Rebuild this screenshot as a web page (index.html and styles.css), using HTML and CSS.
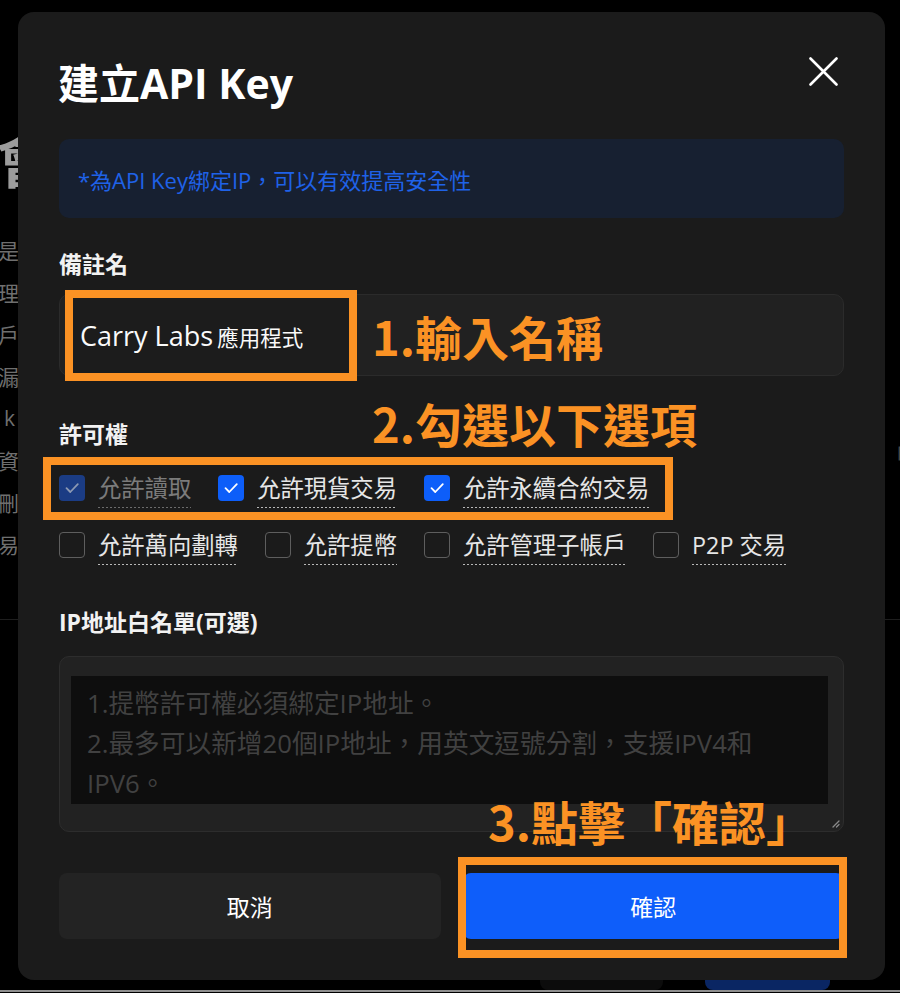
FILE: index.html
```html
<!DOCTYPE html>
<html lang="zh-Hant">
<head>
<meta charset="utf-8">
<title>建立API Key</title>
<link rel="stylesheet" href="styles.css">
</head>
<body>
<div class="page">
  <div class="bg">
    <div class="bg-title">會</div>
    <div class="bg-lines">
      <div class="bg-line">是</div>
      <div class="bg-line">理</div>
      <div class="bg-line">戶</div>
      <div class="bg-line">漏</div>
      <div class="bg-line bg-latin">k</div>
      <div class="bg-line bg-split"><span>資</span><span class="bg-right">「權</span></div>
      <div class="bg-line">刪</div>
      <div class="bg-line">易</div>
    </div>
    <div class="bg-rule"></div>
    <div class="bg-actions"><span class="bg-btn"></span><span class="bg-btn bg-btn-primary"></span></div>
    <div class="bg-edge"></div>
  </div>

  <div class="modal">
    <div class="modal-head">
      <h1 class="modal-title">建立API Key</h1>
      <svg class="close" width="29" height="29" viewBox="0 0 29 29" aria-label="關閉">
        <path d="M1.5 1.5 L27.5 27.5 M27.5 1.5 L1.5 27.5" stroke="#ffffff" stroke-width="2.6" stroke-linecap="round" fill="none"/>
      </svg>
    </div>

    <div class="notice">*為API Key綁定IP，可以有效提高安全性</div>

    <div class="field-label">備註名</div>
    <div class="text-input"><span class="input-value"><span class="latin">Carry Labs</span> <span class="cjk">應用程式</span></span></div>

    <div class="field-label label-perm">許可權</div>
    <div class="options">
      <div class="opt-row">
        <div class="opt">
          <span class="cb cb-disabled"><svg width="26" height="26" viewBox="0 0 26 26"><path d="M7.5 13.2 L11.3 17 L18.8 9.2" stroke="#8c99b3" stroke-width="1.8" fill="none" stroke-linecap="round" stroke-linejoin="round"/></svg></span>
          <span class="opt-label opt-label-dim">允許讀取</span>
        </div>
        <div class="opt">
          <span class="cb cb-on"><svg width="26" height="26" viewBox="0 0 26 26"><path d="M7.5 13.2 L11.3 17 L18.8 9.2" stroke="#ffffff" stroke-width="1.8" fill="none" stroke-linecap="round" stroke-linejoin="round"/></svg></span>
          <span class="opt-label">允許現貨交易</span>
        </div>
        <div class="opt">
          <span class="cb cb-on"><svg width="26" height="26" viewBox="0 0 26 26"><path d="M7.5 13.2 L11.3 17 L18.8 9.2" stroke="#ffffff" stroke-width="1.8" fill="none" stroke-linecap="round" stroke-linejoin="round"/></svg></span>
          <span class="opt-label">允許永續合約交易</span>
        </div>
      </div>
      <div class="opt-row">
        <div class="opt"><span class="cb cb-off"></span><span class="opt-label">允許萬向劃轉</span></div>
        <div class="opt"><span class="cb cb-off"></span><span class="opt-label">允許提幣</span></div>
        <div class="opt"><span class="cb cb-off"></span><span class="opt-label">允許管理子帳戶</span></div>
        <div class="opt"><span class="cb cb-off"></span><span class="opt-label">P2P 交易</span></div>
      </div>
    </div>

    <div class="field-label label-ip">IP地址白名單(可選)</div>
    <div class="area-box">
      <textarea class="area" placeholder="1.提幣許可權必須綁定IP地址。&#10;2.最多可以新增20個IP地址，用英文逗號分割，支援IPV4和&#10;IPV6。"></textarea>
      <svg class="grip" width="9" height="9" viewBox="0 0 9 9"><path d="M8 2 L2 8 M8 5.5 L5.5 8" stroke="#8a8a8a" stroke-width="1.3" stroke-linecap="round"/></svg>
    </div>

    <div class="actions">
      <button class="btn btn-cancel">取消</button>
      <button class="btn btn-confirm">確認</button>
    </div>

    <div class="mark mark-name"></div>
    <div class="mark mark-perm"></div>
    <div class="mark mark-confirm"></div>
    <div class="note note-1">1.輸入名稱</div>
    <div class="note note-2">2.勾選以下選項</div>
    <div class="note note-3">3.點擊「確認」</div>
  </div>
</div>
</body>
</html>
```

FILE: styles.css
```css
* { box-sizing: border-box; }

html, body {
  margin: 0;
  padding: 0;
  background: #000;
}

body {
  width: 900px;
  height: 993px;
  overflow: hidden;
  font-family: "Open Sans", "Noto Sans CJK TC", sans-serif;
  color: #fff;
}

.page {
  position: relative;
  width: 900px;
  height: 993px;
}

/* ---------- dimmed page behind the dialog ---------- */
.bg {
  padding-top: 122px;
  color: #777;
}

.bg-title {
  font-family: "Noto Sans CJK TC", sans-serif;
  font-weight: 700;
  font-size: 60px;
  line-height: 70px;
  height: 70px;
  color: #9c9c9c;
  margin-left: -4px;
  white-space: nowrap;
}

.bg-lines {
  margin-top: 37px;
}

.bg-line {
  font-family: "Noto Sans CJK TC", sans-serif;
  font-size: 21px;
  line-height: 42px;
  height: 42px;
  color: #6f6f6f;
  white-space: nowrap;
  margin-left: -2px;
}

.bg-latin {
  font-family: "Open Sans", sans-serif;
  padding-left: 6px;
}

.bg-split {
  display: grid;
  grid-template-columns: 887px auto;
}

.bg-right {
  color: #4a4a4a;
  position: relative;
  top: -5px;
}

.bg-rule {
  margin-top: 54px;
  height: 1px;
  background: #1e1e1e;
}

.bg-actions {
  margin-top: 345px;
  height: 25px;
  display: flex;
  gap: 42px;
  padding-left: 540px;
}

.bg-btn {
  width: 123px;
  height: 25px;
  border-radius: 8px;
  background: #0c0c0c;
}

.bg-btn-primary {
  width: 125px;
  background: #0a2663;
}

.bg-edge {
  height: 2px;
  background: #8f8f8f;
}

/* ---------- dialog ---------- */
.modal {
  position: absolute;
  left: 18px;
  top: 12px;
  width: 867px;
  padding: 0 41px 41px 41px;
  background: #1b1b1b;
  border-radius: 16px;
}

.modal-head {
  display: flex;
  justify-content: space-between;
  align-items: flex-start;
  padding-top: 43px;
}

.modal-title {
  margin: 0 0 0 -1px;
  font-size: 41px;
  line-height: 56px;
  font-weight: 700;
  color: #fff;
}

.close {
  display: block;
  margin-top: 2px;
  margin-right: 6px;
}

.notice {
  margin-top: 28px;
  height: 79px;
  display: flex;
  align-items: center;
  padding: 0 19px;
  background: #172031;
  border-radius: 10px;
  font-size: 22px;
  color: #1f62e8;
}

.field-label {
  margin-top: 31px;
  font-family: "Open Sans", "Noto Sans CJK TC", sans-serif;
  font-weight: 700;
  font-size: 23px;
  line-height: 30px;
  height: 30px;
  color: #f2f2f2;
}

.text-input {
  margin-top: 15px;
  height: 82px;
  display: flex;
  align-items: center;
  padding-left: 20px;
  background: #212121;
  border: 1px solid #2b2b2b;
  border-radius: 10px;
}

.input-value {
  position: relative;
  z-index: 2;
  color: #fafafa;
  white-space: nowrap;
}

.latin {
  font-family: "Open Sans", sans-serif;
  font-size: 27px;
}

.cjk {
  font-family: "Noto Sans CJK TC", sans-serif;
  font-size: 21.5px;
}

.label-perm {
  margin-top: 43px;
}

.options {
  margin-top: 25px;
  display: flex;
  flex-direction: column;
  gap: 23px;
}

.opt-row {
  display: flex;
  gap: 27px;
}

.opt {
  display: flex;
  align-items: flex-start;
  height: 34px;
}

.cb {
  width: 26px;
  height: 26px;
  margin-top: 1px;
  margin-right: 13px;
  border-radius: 4px;
  flex: none;
}

.cb svg { display: block; }

.cb-on { background: #0d5ef9; }

.cb-disabled { background: #1b3c84; }

.cb-off { border: 1.5px solid #5e5e5e; }

.opt-label {
  font-size: 23.3px;
  line-height: 28px;
  padding-bottom: 6px;
  color: #e6e6e6;
  white-space: nowrap;
  background-image: linear-gradient(to right, #b8b8b8 60%, transparent 60%);
  background-size: 4px 1px;
  background-repeat: repeat-x;
  background-position: 0 100%;
}

.opt-label-dim {
  color: #7b7b7b;
  background-image: linear-gradient(to right, #6c6c6c 60%, transparent 60%);
}

.label-ip {
  margin-top: 42px;
}

.area-box {
  position: relative;
  margin-top: 19px;
  height: 176px;
  padding: 19px 15px 0 11px;
  background: #222;
  border: 1px solid #2d2d2d;
  border-radius: 10px;
}

.area {
  display: block;
  width: 100%;
  height: 128px;
  padding: 8px 16px 0 16px;
  border: 0;
  outline: none;
  resize: none;
  overflow: hidden;
  background: #0e0e0e;
  color: #ddd;
  font-family: "Open Sans", "Noto Sans CJK TC", sans-serif;
  font-size: 25.7px;
  line-height: 40px;
}

.area::placeholder {
  color: #414141;
  opacity: 1;
}

.grip {
  position: absolute;
  right: 3px;
  bottom: 3px;
}

.actions {
  margin-top: 41px;
  display: grid;
  grid-template-columns: 1fr 1fr;
  gap: 22px;
}

.btn {
  height: 66px;
  border: 0;
  border-radius: 8px;
  font-family: "Open Sans", "Noto Sans CJK TC", sans-serif;
  font-size: 23px;
  color: #fff;
  padding: 0;
}

.btn-cancel { background: #232323; }

.btn-confirm { background: #0e5efa; }

/* ---------- annotation overlay ---------- */
.mark {
  position: absolute;
  z-index: 1;
  border: 8px solid #fb9224;
}

.mark-name {
  left: 47px;
  top: 278px;
  width: 292px;
  height: 91px;
  background: #1c1c1c;
}

.mark-perm {
  left: 25px;
  top: 445px;
  width: 630px;
  height: 63px;
}

.mark-confirm {
  left: 440px;
  top: 845px;
  width: 389px;
  height: 101px;
}

.note {
  position: absolute;
  z-index: 3;
  font-family: "Noto Sans CJK TC", sans-serif;
  font-weight: 700;
  font-size: 47px;
  line-height: 47px;
  color: #fb9224;
  white-space: nowrap;
}

.note-1 { left: 354px; top: 300px; }

.note-2 { left: 354px; top: 387px; }

.note-3 { left: 470px; top: 785px; }
```
